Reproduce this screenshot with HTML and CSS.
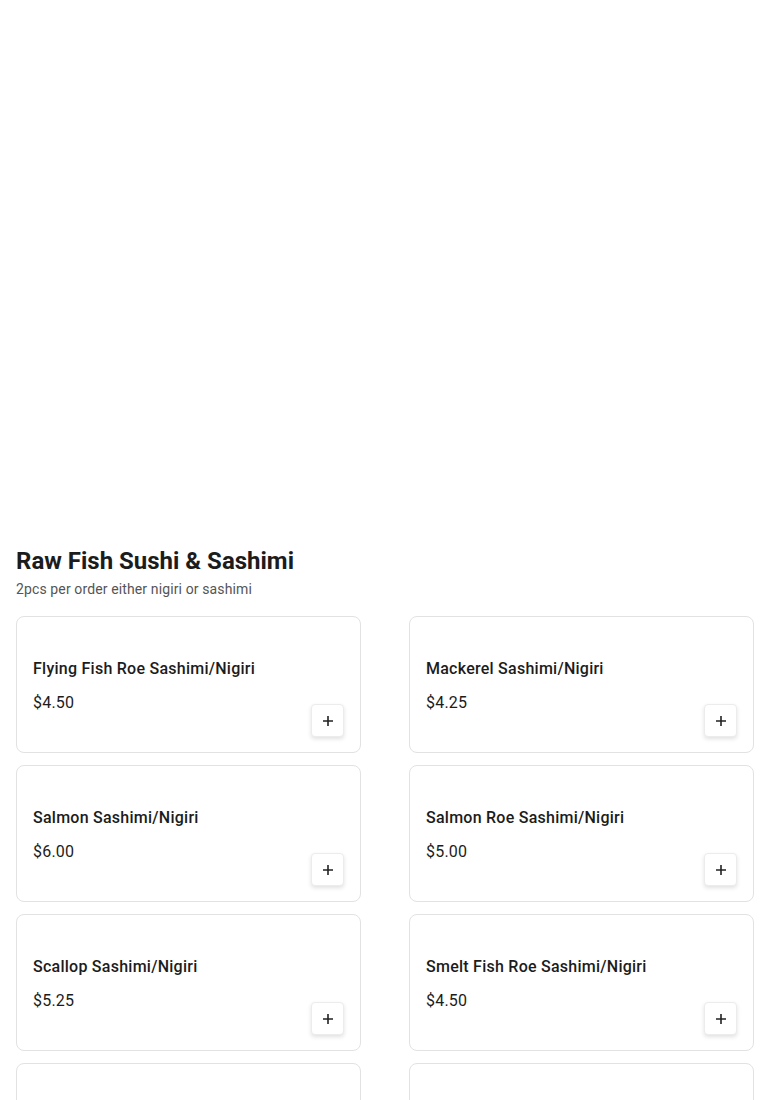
FILE: index.html
```html
<!DOCTYPE html>
<html>
<head>
<meta charset="utf-8">
<link rel="stylesheet" href="styles.css">
</head>
<body>
<div class="hero"></div>
<section class="menu">
  <h1 class="title">Raw Fish Sushi &amp; Sashimi</h1>
  <p class="subtitle">2pcs per order either nigiri or sashimi</p>
  <div class="grid">
    <div class="card"><div class="info"><div class="name">Flying Fish Roe Sashimi/Nigiri</div><div class="price">$4.50</div></div><button class="add"><svg width="12" height="12" viewBox="0 0 12 12"><path d="M6 1v10M1 6h10" stroke="#222" stroke-width="1.6"/></svg></button></div>
    <div class="card"><div class="info"><div class="name">Mackerel Sashimi/Nigiri</div><div class="price">$4.25</div></div><button class="add"><svg width="12" height="12" viewBox="0 0 12 12"><path d="M6 1v10M1 6h10" stroke="#222" stroke-width="1.6"/></svg></button></div>
    <div class="card"><div class="info"><div class="name">Salmon Sashimi/Nigiri</div><div class="price">$6.00</div></div><button class="add"><svg width="12" height="12" viewBox="0 0 12 12"><path d="M6 1v10M1 6h10" stroke="#222" stroke-width="1.6"/></svg></button></div>
    <div class="card"><div class="info"><div class="name">Salmon Roe Sashimi/Nigiri</div><div class="price">$5.00</div></div><button class="add"><svg width="12" height="12" viewBox="0 0 12 12"><path d="M6 1v10M1 6h10" stroke="#222" stroke-width="1.6"/></svg></button></div>
    <div class="card"><div class="info"><div class="name">Scallop Sashimi/Nigiri</div><div class="price">$5.25</div></div><button class="add"><svg width="12" height="12" viewBox="0 0 12 12"><path d="M6 1v10M1 6h10" stroke="#222" stroke-width="1.6"/></svg></button></div>
    <div class="card"><div class="info"><div class="name">Smelt Fish Roe Sashimi/Nigiri</div><div class="price">$4.50</div></div><button class="add"><svg width="12" height="12" viewBox="0 0 12 12"><path d="M6 1v10M1 6h10" stroke="#222" stroke-width="1.6"/></svg></button></div>
    <div class="card"><div class="info"><div class="name">&nbsp;</div><div class="price">&nbsp;</div></div></div>
    <div class="card"><div class="info"><div class="name">&nbsp;</div><div class="price">&nbsp;</div></div></div>
  </div>
</section>
</body>
</html>
```
FILE: styles.css
```css
* { box-sizing: border-box; }
body {
  margin: 0;
  font-family: Roboto, "Liberation Sans", sans-serif;
  color: #1c1c1c;
  background: #fff;
}
.hero { height: 545px; }
.menu { padding: 0 16px; }
.title {
  margin: 0;
  font-size: 24px;
  line-height: 32px;
  font-weight: 700;
  color: #1c1c1c;
}
.subtitle {
  margin: 2px 0 0;
  font-size: 14px;
  line-height: 20px;
  letter-spacing: 0.12px;
  color: #555;
}
.grid {
  margin-top: 17px;
  display: grid;
  grid-template-columns: 1fr 1fr;
  column-gap: 48px;
  row-gap: 12px;
}
.card {
  height: 137px;
  border: 1px solid #e2e2e2;
  border-radius: 8px;
  padding: 16px;
  display: flex;
  align-items: center;
  justify-content: space-between;
}
.info {
  display: flex;
  flex-direction: column;
  gap: 12px;
  padding-top: 4px;
}
.name {
  font-size: 16px;
  line-height: 20px;
  font-weight: 500;
  letter-spacing: 0.25px;
  color: #1c1c1c;
}
.price {
  font-size: 16px;
  line-height: 24px;
  letter-spacing: 0.2px;
  color: #1c1c1c;
}
.add {
  align-self: flex-end;
  width: 33px;
  height: 33px;
  margin-bottom: -1px;
  border: 1px solid #ececec;
  border-radius: 4px;
  background: #fff;
  box-shadow: 0 2px 4px rgba(0,0,0,0.12);
  display: flex;
  align-items: center;
  justify-content: center;
  padding: 0;
}
```
